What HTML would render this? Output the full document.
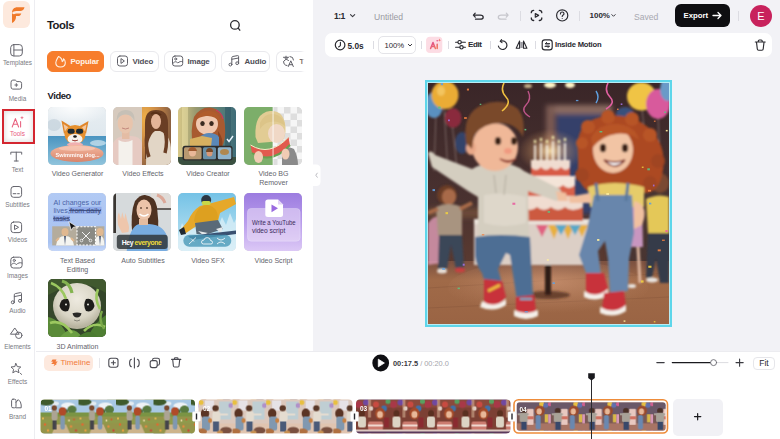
<!DOCTYPE html>
<html><head><meta charset="utf-8">
<style>
*{box-sizing:border-box;margin:0;padding:0}
html,body{width:780px;height:439px;overflow:hidden;background:#fff;font-family:"Liberation Sans",sans-serif;color:#1b1b1f}
.a{position:absolute}
svg{position:absolute;overflow:visible}
#side{position:absolute;left:0;top:0;width:35px;height:439px;background:#fff;border-right:1px solid #ededf1}
.sl{position:absolute;left:0;width:35px;text-align:center;font-size:6.4px;color:#7a7a82;line-height:7px;white-space:nowrap}
.ic{fill:none;stroke:#66666e;stroke-width:1.0;stroke-linecap:round;stroke-linejoin:round}
#panel{position:absolute;left:36px;top:0;width:277px;height:351px;background:#fff}
#stage{position:absolute;left:313px;top:0;width:467px;height:351px;background:#f2f2f6}
#tl{position:absolute;left:36px;top:351px;width:744px;height:88px;background:#fff;border-top:1px solid #ececf0}
.pill{position:absolute;top:51px;height:21px;border-radius:6px;border:1px solid #e9e9ed;background:#fff;font-size:7.9px;letter-spacing:-0.15px;font-weight:bold;color:#4e4e56;line-height:19px;white-space:nowrap}
.card{position:absolute;width:58px;height:58px;border-radius:5px;overflow:hidden}
.lbl{position:absolute;width:80px;text-align:center;font-size:7.05px;color:#64646c;line-height:9px;white-space:nowrap}
.t8{font-size:8.3px;font-weight:bold;color:#2a2a30;white-space:nowrap;line-height:10px}
.div{position:absolute;width:1px;background:#dcdce2}
</style></head><body>

<div id="side">
  <div id="logo" class="a" style="left:3px;top:1px;width:27px;height:27px;border-radius:6px;background:#fde9dd"></div>
  <div class="sl" style="top:59px">Templates</div>
  <div class="sl" style="top:94.5px">Media</div>
  <div class="sl" style="top:130px;color:#e8587e">Tools</div>
  <div class="sl" style="top:165.5px">Text</div>
  <div class="sl" style="top:200.5px">Subtitles</div>
  <div class="sl" style="top:236px">Videos</div>
  <div class="sl" style="top:271.5px">Images</div>
  <div class="sl" style="top:307px">Audio</div>
  <div class="sl" style="top:342.5px">Elements</div>
  <div class="sl" style="top:377.5px">Effects</div>
  <div class="sl" style="top:413px">Brand</div>
  <div class="a" style="left:1.5px;top:108.5px;width:33px;height:35.5px;border:2px solid #d42630;box-shadow:inset 0 0 5px 1px rgba(0,0,0,0.13)"></div>
</div>

<div id="panel">
  <div class="a" style="left:11px;top:19.3px;font-size:11.3px;letter-spacing:-0.45px;font-weight:bold;color:#1b1b1f;line-height:12px">Tools</div>
  <div class="pill" style="left:11px;width:57px;background:#f77d2c;border-color:#f77d2c;color:#fff4e8;padding-left:22.5px">Popular</div>
  <div class="pill" style="left:73.5px;width:49.5px;padding-left:22px">Video</div>
  <div class="pill" style="left:127.5px;width:52px;padding-left:23px">Image</div>
  <div class="pill" style="left:184.5px;width:49.5px;padding-left:23px">Audio</div>
  <div class="pill" style="left:239.5px;width:40px;padding-left:23px;border-right:none;border-radius:6px 0 0 6px">T</div>
  <div class="a" style="left:265px;top:48px;width:12px;height:27px;background:linear-gradient(90deg,rgba(255,255,255,0) 0,rgba(255,255,255,0.9) 3px,#fff 5px)"></div>
  <div class="a" style="left:11.5px;top:91px;font-size:9.4px;letter-spacing:-0.4px;font-weight:bold;line-height:10px;color:#1b1b1f">Video</div>
  <div class="card" style="left:11.5px;top:106.5px;background:#ccc"><svg width="58" height="58" viewBox="0 0 58 58" style="left:0;top:0">
<defs><linearGradient id="g1s" x1="0" y1="0" x2="0" y2="1"><stop offset="0" stop-color="#e8eef2"/><stop offset="0.5" stop-color="#dfe8ee"/><stop offset="1" stop-color="#c8dce6"/></linearGradient>
<linearGradient id="g1w" x1="0" y1="0" x2="0" y2="1"><stop offset="0" stop-color="#4a94c0"/><stop offset="1" stop-color="#90c4dc"/></linearGradient>
<linearGradient id="g1r" x1="0" y1="0" x2="0" y2="1"><stop offset="0" stop-color="#f4b8a0"/><stop offset="1" stop-color="#d8846a"/></linearGradient>
<radialGradient id="g1sun" cx="0.45" cy="0" r="0.6"><stop offset="0" stop-color="#fff" stop-opacity="0.9"/><stop offset="1" stop-color="#fff" stop-opacity="0"/></radialGradient></defs>
<rect width="58" height="58" fill="url(#g1s)"/>
<rect width="58" height="30" fill="url(#g1sun)"/>
<ellipse cx="6" cy="18" rx="7" ry="6" fill="#b8c8d4" opacity="0.5"/>
<rect y="29" width="58" height="29" fill="url(#g1w)"/>
<ellipse cx="50" cy="36" rx="8" ry="3" fill="#e8f4f8" opacity="0.6"/>
<path d="M13.5 13.5L16 27L24 20Z" fill="#e0862a"/><path d="M40.5 14L38 27L30 20Z" fill="#e0862a"/>
<path d="M15.5 17L17 25L21.5 21Z" fill="#f4c8a0"/><path d="M38.5 17.5L37 25L32.5 21Z" fill="#f4c8a0"/>
<ellipse cx="27" cy="27.5" rx="10.5" ry="9.5" fill="#e6902e"/>
<ellipse cx="27" cy="32" rx="7.5" ry="5" fill="#f6f2ec"/>
<rect x="19.5" y="21.8" width="7.2" height="5" rx="2.4" fill="#1c2a32"/><rect x="28" y="21.8" width="7.2" height="5" rx="2.4" fill="#1c2a32"/>
<ellipse cx="27" cy="29.5" rx="1.8" ry="1.3" fill="#1a1a1a"/>
<path d="M24 33Q27 35 30 33" stroke="#8a3a30" stroke-width="0.8" fill="#d86060"/>
<ellipse cx="27" cy="37.5" rx="8" ry="2.2" fill="#f0b0b0"/>
<ellipse cx="29" cy="46.5" rx="26.5" ry="8.5" fill="url(#g1r)"/>
<ellipse cx="29" cy="41.5" rx="18" ry="2.5" fill="#f8d0c0" opacity="0.6"/>
<text x="7.5" y="50" font-family="Liberation Sans" font-size="5.55" font-weight="bold" fill="#fff" opacity="0.95">Swimming dog...</text>
</svg></div>
  <div class="card" style="left:77px;top:106.5px;background:#ccc"><svg width="58" height="58" viewBox="0 0 58 58" style="left:0;top:0">
<defs><radialGradient id="g2a" cx="0.1" cy="0.2" r="0.9"><stop offset="0" stop-color="#f0b048"/><stop offset="0.5" stop-color="#c88848"/><stop offset="1" stop-color="#8a6040"/></radialGradient></defs>
<rect width="29" height="58" fill="#d6cabe"/>
<rect x="29" width="29" height="58" fill="url(#g2a)"/>
<path d="M0 36Q4 29 12 29H18Q27 29 29 36V58H0Z" fill="#e6cac2"/>
<path d="M5.5 33Q12 37 19.5 33V58H5.5Z" fill="#f4f1ec"/>
<rect x="9" y="22" width="7.5" height="10" fill="#e4bca4"/>
<ellipse cx="12.3" cy="16.5" rx="7.6" ry="10" fill="#e8c4ac"/>
<path d="M3.5 14Q3.5 3 12.5 3Q22 3 21.5 14Q19 7.5 12.5 7.5Q6 7.5 3.5 14Z" fill="#c6c0b6"/>
<path d="M9 21Q12.5 23 16 21" stroke="#b87870" stroke-width="0.8" fill="none"/>
<path d="M32 52V16Q32 3 43 3Q55 3 55 16V52Z" fill="#6a3e24"/>
<path d="M33 58Q33 30 42 24H47Q58 28 58 44V58Z" fill="#e2d6c6"/>
<ellipse cx="43" cy="14.5" rx="5" ry="7.5" fill="#e4b498"/>
<path d="M38 7Q43 4 48 8" stroke="#5a3018" stroke-width="2" fill="none"/>
<path d="M34 26Q32 40 36 50M52 24Q55 34 52 46" stroke="#6a3e24" stroke-width="3.5" fill="none"/>
</svg></div>
  <div class="card" style="left:142px;top:106.5px;background:#ccc"><svg width="58" height="58" viewBox="0 0 58 58" style="left:0;top:0">
<defs><linearGradient id="g3b" x1="0" y1="0" x2="1" y2="0"><stop offset="0" stop-color="#d8c888"/><stop offset="0.3" stop-color="#9a9a70"/><stop offset="0.7" stop-color="#5a8078"/><stop offset="1" stop-color="#3e6c78"/></linearGradient></defs>
<rect width="58" height="58" fill="url(#g3b)"/>
<rect x="4" y="0" width="6" height="58" fill="#f0e4a8" opacity="0.5"/>
<rect x="47" y="0" width="6" height="58" fill="#2a5060" opacity="0.5"/>
<path d="M15 40Q12 22 16 10Q22 0 32 0.5Q46 2 47 20Q48 32 44 40Z" fill="#a85a30"/>
<path d="M40 24Q46 32 44 40L40 38Z" fill="#8a4420"/>
<ellipse cx="29" cy="17" rx="11" ry="10.5" fill="#f0c8b0"/>
<path d="M18 13Q22 3 32 4Q42 5 42 15Q36 8 28 9Q21 10 18 13Z" fill="#b05c2c"/>
<path d="M38 3Q44 6 45 12" stroke="#c83a60" stroke-width="1.2" fill="none"/>
<ellipse cx="24.5" cy="16.5" rx="2.2" ry="2.6" fill="#3a2a20"/><ellipse cx="33.5" cy="16.5" rx="2.2" ry="2.6" fill="#3a2a20"/>
<path d="M22 40V30Q26 26 31 26Q38 26 41 30V40Z" fill="#5a88b8"/>
<path d="M12 32L24 29L34 31L33 40L12 40Z" fill="#d8b060"/>
<path d="M49 32L51 34.5L55 29" stroke="#e8f4ff" stroke-width="1.4" fill="none"/>
<rect x="0" y="50" width="58" height="8" fill="#3a5040"/>
<rect x="4.5" y="38.8" width="50" height="14.8" rx="2.5" fill="#2c2c2c"/>
<rect x="6" y="40.2" width="17.6" height="12" rx="1.5" fill="#b89870"/><ellipse cx="14.5" cy="45.5" rx="3.5" ry="4" fill="#eab898"/><path d="M10 44Q11 40 14.5 40Q18 40 19 44" fill="#a05a30"/>
<rect x="25" y="40.2" width="13" height="12" rx="1.5" fill="#6a90a8"/><ellipse cx="31.5" cy="46" rx="3" ry="3.5" fill="#d89878"/><path d="M28 45Q28 41 31.5 41Q35 41 35 45" fill="#7a4a28"/>
<rect x="39.8" y="40.2" width="13.5" height="12" rx="1.5" fill="#90b4cc"/><ellipse cx="46.5" cy="45" rx="4.5" ry="3" fill="#b08850"/>
</svg></div>
  <div class="card" style="left:207.5px;top:106.5px;background:#ccc"><svg width="58" height="58" viewBox="0 0 58 58" style="left:0;top:0">
<defs><pattern id="chk" x="1" y="0" width="13" height="13" patternUnits="userSpaceOnUse"><rect width="13" height="13" fill="#f6f6f6"/><rect width="6.5" height="6.5" fill="#dedede"/><rect x="6.5" y="6.5" width="6.5" height="6.5" fill="#dedede"/></pattern></defs>
<rect width="29" height="58" fill="#7cae6a"/>
<rect x="29" width="29" height="58" fill="url(#chk)"/>
<path d="M38 58V44Q44 38 50 42Q54 50 54 58Z" fill="#8a8a8a"/>
<path d="M11.5 30Q10 6 26 4Q40 3 41.5 20Q42 30 38 34L14 36Z" fill="#e2cc94"/>
<ellipse cx="32.5" cy="26.5" rx="8.5" ry="9.5" fill="#f0d8c6"/>
<path d="M16 16Q20 6 30 7Q40 9 41 19Q34 13 26 15Q20 16 16 22Z" fill="#dcc488"/>
<path d="M6.5 38Q26 50 44.5 30L46 38Q28 58 8 46Z" fill="#e25a4e"/>
<path d="M6.5 38Q26 50 44.5 30" stroke="#f4f0c8" stroke-width="1" fill="none"/>
<path d="M8 46Q28 58 46 38" stroke="#68a050" stroke-width="2" fill="none"/>
<ellipse cx="14.5" cy="50" rx="4.5" ry="6" fill="#f0ccb4"/><ellipse cx="41.5" cy="47" rx="4" ry="5.5" fill="#f0ccb4"/>
<rect x="28.6" y="0" width="0.9" height="58" fill="#fff" opacity="0.85"/>
</svg></div>
  <div class="card" style="left:11.5px;top:193px;background:#ccc"><svg width="58" height="58" viewBox="0 0 58 58" style="left:0;top:0">
<defs><linearGradient id="g5" x1="0" y1="0" x2="0" y2="1"><stop offset="0" stop-color="#b2caf4"/><stop offset="0.85" stop-color="#a8c2f0"/><stop offset="1" stop-color="#c4d6f8"/></linearGradient></defs>
<rect width="58" height="58" fill="url(#g5)"/>
<text x="5.5" y="11.8" font-family="Liberation Sans" font-size="7.1" fill="#4a64a8">AI changes our</text>
<rect x="20.5" y="13.8" width="33" height="7" fill="#92acea"/>
<text x="5.5" y="20" font-family="Liberation Sans" font-size="7.1" fill="#4a64a8">lives,</text>
<text x="22" y="20" font-family="Liberation Sans" font-size="7.1" fill="#3a4a7a" textLength="31">from daily</text>
<path d="M21 17.5H53" stroke="#3a4a7a" stroke-width="0.9"/>
<rect x="5" y="22.5" width="17" height="6.3" fill="#92acea"/>
<text x="5.5" y="28" font-family="Liberation Sans" font-size="7.1" fill="#3a4a7a">tasks</text>
<path d="M5 25.7H21" stroke="#3a4a7a" stroke-width="0.9"/>
<rect x="4.2" y="33.3" width="52.2" height="19.1" fill="#b4ac9c"/>
<ellipse cx="17" cy="39" rx="3.5" ry="4" fill="#e0b890"/><path d="M8 52.4Q9 43 17 43Q25 43 26 52.4Z" fill="#f4f4f0"/><path d="M16.2 43L17 52.4L17.8 43Z" fill="#2a3a5a"/>
<path d="M8 48L11 45M26 48L23 45" stroke="#e0b890" stroke-width="2"/>
<ellipse cx="52" cy="39" rx="3.5" ry="4" fill="#e0b890"/><path d="M45 52.4Q46 43 52 43Q56.4 43 56.4 52.4Z" fill="#f4f4f0"/><path d="M51.2 43L52 52.4L52.8 43Z" fill="#2a3a5a"/>
<rect x="29" y="33.8" width="18.5" height="18.2" fill="#8a8a84" stroke="#fff" stroke-width="1.1" stroke-dasharray="2 1.4"/>
<path d="M34 39L42 47M42 39L34 47" stroke="#fff" stroke-width="0.9"/><circle cx="33.5" cy="47.5" r="1.3" fill="none" stroke="#fff" stroke-width="0.7"/><circle cx="42.5" cy="47.5" r="1.3" fill="none" stroke="#fff" stroke-width="0.7"/>
<path d="M20.8 28.6L28.6 33.6L25 34.4L23.2 37.4Z" fill="#141414" stroke="#fff" stroke-width="0.7"/>
</svg></div>
  <div class="card" style="left:77px;top:193px;background:#ccc"><svg width="58" height="58" viewBox="0 0 58 58" style="left:0;top:0">
<rect width="58" height="58" fill="#d6dadc"/>
<rect x="0.3" width="2.7" height="40" fill="#3a3632"/>
<rect x="38" y="0" width="20" height="15.6" fill="#e0dcd8"/><path d="M44 2Q50 4 52 10" stroke="#dca898" stroke-width="3" fill="none"/>
<rect x="37" y="15.2" width="21" height="1.6" fill="#4a4440"/>
<path d="M19.4 42Q17 20 22 8Q27 1.5 32 2Q42 3 44 14Q46 28 45 42Z" fill="#4e3222"/>
<ellipse cx="31" cy="17" rx="7.5" ry="10.5" fill="#ecc4aa"/>
<path d="M26.5 21Q31 25 35.5 21" stroke="#fff" stroke-width="1.5" fill="none"/>
<ellipse cx="28" cy="15" rx="1" ry="0.8" fill="#3a2418"/><ellipse cx="34" cy="15" rx="1" ry="0.8" fill="#3a2418"/>
<path d="M13.7 58Q16 34 26 31H36Q52 32 54.7 46V58Z" fill="#78ace0"/>
<rect x="26" y="26" width="9" height="6" fill="#e4bca0"/>
<path d="M5 32Q3.8 22 6 19.5L8 26L9.2 19L11.2 26L12.6 20L14.4 28Q17 34 15.4 39L9 40Z" fill="#eec6ac"/>
<rect x="3.8" y="41.8" width="50.9" height="14.2" rx="3" fill="#30363a" opacity="0.85"/>
<text x="8.8" y="51.6" font-family="Liberation Sans" font-size="6.9" font-weight="bold" fill="#fff" textLength="40">Hey <tspan fill="#f0dc3a">everyone</tspan></text>
</svg></div>
  <div class="card" style="left:142px;top:193px;background:#ccc"><svg width="58" height="58" viewBox="0 0 58 58" style="left:0;top:0">
<defs><linearGradient id="g7" x1="0" y1="0" x2="0" y2="1"><stop offset="0" stop-color="#74c2e6"/><stop offset="0.6" stop-color="#a4d8ee"/><stop offset="1" stop-color="#e4f4fa"/></linearGradient></defs>
<rect width="58" height="58" fill="url(#g7)"/>
<path d="M0 44L4 30L8 38L12 26L16 36L20 30V58H0Z" fill="#d8eef6" opacity="0.8"/>
<path d="M40 34L44 24L48 32L52 20L56 30L58 26V58H40Z" fill="#d8eef6" opacity="0.8"/>
<path d="M1.5 38L10 28Q14 18 22 13L34 10L56 4L58 11L42 20L40 28Q32 32 20 32L8 40Z" fill="#e6a82a"/>
<path d="M16 28Q18 12 30 12Q40 14 40 26L36 31L20 32Z" fill="#dda020"/>
<ellipse cx="28.2" cy="7" rx="5" ry="5" fill="#2c3642"/>
<rect x="23.6" y="7.9" width="9.2" height="4.2" rx="2" fill="#c8d848"/>
<path d="M17 30L18.5 41L30 41L44.8 36L40 27Z" fill="#5a6a78"/>
<path d="M20 38L25 42L30 40Z" fill="#e4e8ea"/><path d="M38 36L43 40L45 34Z" fill="#e4e8ea"/>
<path d="M10 43L58 37.5V41L14 47Z" fill="#3a5070"/>
<path d="M1 37L6 34L8 41L3 42Z" fill="#202830"/>
<rect x="5.3" y="41.8" width="48" height="12" rx="6" fill="#4a98b8" opacity="0.8"/>
<path d="M11 51L18 44.5M13 45.5L16 48.5" stroke="#fff" stroke-width="0.8"/>
<path d="M25.5 51Q23.5 51 23.5 49Q23.5 47 26 47Q26.5 44.5 29.2 44.5Q32 44.5 32.5 47.5Q34.5 47.5 34.5 49.5Q34.5 51 33 51Z" stroke="#fff" stroke-width="0.8" fill="none"/>
<path d="M39 45Q43 49 47 45M39 51Q43 47 47 51" stroke="#fff" stroke-width="0.8" fill="none"/>
</svg></div>
  <div class="card" style="left:207.5px;top:193px;background:#ccc"><svg width="58" height="58" viewBox="0 0 58 58" style="left:0;top:0">
<defs><linearGradient id="g8" x1="0" y1="0" x2="0" y2="1"><stop offset="0" stop-color="#9c7ce0"/><stop offset="0.5" stop-color="#b89ceb"/><stop offset="1" stop-color="#dcc8f6"/></linearGradient></defs>
<rect width="58" height="58" fill="url(#g8)"/>
<rect x="3.6" y="15.6" width="52.4" height="32.5" rx="3.5" fill="#ecdff8" opacity="0.55" stroke="#f8f2fe" stroke-width="0.8"/>
<path d="M24 6.5H34L39 11.5V21.5Q39 24 36.5 24H24Q21.3 24 21.3 21.5V9Q21.3 6.5 24 6.5Z" fill="#fff"/>
<path d="M34 6.5V11.5H39Z" fill="#e4d4f8"/>
<path d="M27.5 11.5L34 15.3L27.5 19.2Z" fill="#9a6ae0"/>
<text x="7.9" y="32.4" font-family="Liberation Sans" font-size="6.6" fill="#3a2c5c" textLength="43.8" lengthAdjust="spacingAndGlyphs">Write a YouTube</text>
<text x="7.9" y="39.5" font-family="Liberation Sans" font-size="6.6" fill="#3a2c5c">video script</text>
</svg></div>
  <div class="card" style="left:11.5px;top:279px;background:#ccc"><svg width="58" height="58" viewBox="0 0 58 58" style="left:0;top:0">
<defs><radialGradient id="pf" cx="0.5" cy="0.35" r="0.6"><stop offset="0" stop-color="#eeeae0"/><stop offset="0.7" stop-color="#d8d4c4"/><stop offset="1" stop-color="#b8b4a0"/></radialGradient></defs>
<rect width="58" height="58" fill="#34462a"/>
<path d="M0 0H58V14Q40 2 20 6L0 16Z" fill="#40582e"/>
<ellipse cx="29" cy="27" rx="24" ry="23" fill="url(#pf)"/>
<path d="M11.5 27Q13 18 20 20Q23.5 26 20 32Q13.5 34 11.5 27Z" fill="#1c1c1a"/><path d="M46.5 27Q45 18 38 20Q34.5 26 38 32Q44.5 34 46.5 27Z" fill="#1c1c1a"/>
<circle cx="18" cy="25.5" r="1" fill="#e8e8e0"/><circle cx="40" cy="25.5" r="1" fill="#e8e8e0"/>
<path d="M24.5 34.3Q29 32.8 33.5 34.3Q32.5 38.6 29 38.6Q25.5 38.6 24.5 34.3Z" fill="#2a2a28"/>
<path d="M26 41Q29 43 32 41" stroke="#6a6a60" stroke-width="0.7" fill="none"/>
<path d="M0 38Q12 40 20 58H0Z" fill="#5a8a38"/><path d="M58 36Q46 44 40 58H58Z" fill="#4e7e32"/>
<path d="M12 58Q24 44 34 58Z" fill="#6a9e42"/><path d="M30 58Q42 48 50 58Z" fill="#4a7a30"/>
<path d="M3 4Q14 8 18 20M2 44Q14 40 24 54M36 52Q46 42 57 48M50 10Q46 20 52 30" stroke="#9cc860" stroke-width="2.6" fill="none"/>
<path d="M14 2Q22 4 24 14" stroke="#84b450" stroke-width="3.2" fill="none"/>
<path d="M54 32Q50 40 56 50" stroke="#7aa848" stroke-width="2.4" fill="none"/>
</svg></div>
  <div class="lbl" style="left:1.5px;top:169px">Video Generator</div>
  <div class="lbl" style="left:67px;top:169px">Video Effects</div>
  <div class="lbl" style="left:132px;top:169px">Video Creator</div>
  <div class="lbl" style="left:197.5px;top:169px">Video BG<br>Remover</div>
  <div class="lbl" style="left:1.5px;top:255.5px">Text Based<br>Editing</div>
  <div class="lbl" style="left:67px;top:255.5px">Auto Subtitles</div>
  <div class="lbl" style="left:132px;top:255.5px">Video SFX</div>
  <div class="lbl" style="left:197.5px;top:255.5px">Video Script</div>
  <div class="lbl" style="left:1.5px;top:341.5px">3D Animation</div>
</div>

<div id="stage">
  <div class="a t8" style="left:21px;top:10.5px;font-size:8.6px;letter-spacing:-0.55px">1:1</div>
  <div class="a" style="left:61px;top:12px;font-size:8.6px;color:#9a9aa2;line-height:10px">Untitled</div>
  <div class="div" style="left:207px;top:11px;height:10px"></div>
  <div class="div" style="left:266px;top:11px;height:10px"></div>
  <div class="a t8" style="left:276.5px;top:11px;font-size:8px">100%</div>
  <div class="a" style="left:321px;top:11.5px;font-size:8.6px;color:#a8a8b0;line-height:10px">Saved</div>
  <div class="a" style="left:361.5px;top:4px;width:55.5px;height:23px;border-radius:6px;background:#0e0e11"></div>
  <div class="a t8" style="left:370.5px;top:11px;color:#fff;font-size:7.8px">Export</div>
  <div class="div" style="left:424.5px;top:11px;height:10px"></div>
  <div class="a" style="left:437px;top:4.5px;width:22px;height:22px;border-radius:50%;background:#c8225c;color:#fff;font-size:11px;text-align:center;line-height:22px">E</div>

  <div class="a" style="left:12px;top:33px;width:447px;height:24px;background:#fff;border-radius:7px"></div>
  <div class="a t8" style="left:34.5px;top:40.5px">5.0s</div>
  <div class="div" style="left:60px;top:41px;height:8px"></div>
  <div class="a" style="left:65px;top:36px;width:38px;height:18px;border:1px solid #e4e4e8;border-radius:5px"></div>
  <div class="a t8" style="left:71.5px;top:40.5px;font-weight:normal;color:#2a2a30;font-size:7.7px">100%</div>
  <div class="div" style="left:108px;top:41px;height:8px"></div>
  <div class="a" style="left:113px;top:37px;width:16px;height:16px;border-radius:4px;background:#fde0e6"></div>
  <div class="div" style="left:134.5px;top:41px;height:8px"></div>
  <div class="a t8" style="left:155px;top:40px;font-size:8.1px;letter-spacing:-0.45px">Edit</div>
  <div class="div" style="left:176.5px;top:41px;height:8px"></div>
  <div class="div" style="left:221.5px;top:41px;height:8px"></div>
  <div class="a t8" style="left:242px;top:40px;font-size:7.6px;letter-spacing:-0.2px">Inside Motion</div>

  <div class="a" style="left:112px;top:80px;width:247px;height:247px;border:2px solid #5ed6ea;background:#b8ecf4"></div>
<div class="a" style="left:115px;top:83px;width:241px;height:241px;overflow:hidden;background:#3e2a2e">
<svg width="241" height="241" viewBox="0 0 241 241" style="left:0;top:0">
<defs>
<linearGradient id="cbg" x1="0" y1="0" x2="0" y2="1"><stop offset="0" stop-color="#3a2628"/><stop offset="0.5" stop-color="#4a3230"/><stop offset="0.75" stop-color="#5a3a30"/><stop offset="1" stop-color="#5a3a30"/></linearGradient>
<linearGradient id="fl" x1="0" y1="0" x2="0" y2="1"><stop offset="0" stop-color="#7a5040"/><stop offset="0.3" stop-color="#a06a48"/><stop offset="1" stop-color="#9a6444"/></linearGradient>
<radialGradient id="glow" cx="0.5" cy="0.5" r="0.5"><stop offset="0" stop-color="#ffe8b0" stop-opacity="0.9"/><stop offset="0.5" stop-color="#f0b070" stop-opacity="0.35"/><stop offset="1" stop-color="#f0b070" stop-opacity="0"/></radialGradient>
<radialGradient id="flg" cx="0.5" cy="0.4" r="0.55"><stop offset="0" stop-color="#d8a080" stop-opacity="0.6"/><stop offset="1" stop-color="#c89070" stop-opacity="0"/></radialGradient>
<filter id="bl" x="-5%" y="-5%" width="110%" height="110%"><feGaussianBlur stdDeviation="0.9"/></filter>
<filter id="bl2" x="-20%" y="-20%" width="140%" height="140%"><feGaussianBlur stdDeviation="2.5"/></filter>
</defs>
<rect width="241" height="241" fill="url(#cbg)"/>
<g filter="url(#bl2)">
<rect x="118" y="22" width="66" height="9" fill="#8a6a60"/>
<rect x="118" y="22" width="9" height="150" fill="#7a5a52"/>
<rect x="128" y="31" width="50" height="100" fill="#34406a"/>
<rect x="0" y="125" width="60" height="10" fill="#6a4838"/>
<rect x="180" y="100" width="61" height="80" fill="#4a3430"/>
</g>
<rect x="0" y="178" width="241" height="63" fill="url(#fl)"/>
<path d="M0 205L241 190M0 225L241 214" stroke="#84543a" stroke-width="0.8" opacity="0.5"/>
<ellipse cx="120" cy="205" rx="100" ry="28" fill="url(#flg)"/>
<g filter="url(#bl)">
<!-- balloons left -->
<path d="M16 25L20 90M24 40L30 95M8 30L6 88" stroke="#b8a8a0" stroke-width="0.7" opacity="0.7"/>
<ellipse cx="6" cy="22" rx="9" ry="13" fill="#5a90c0"/>
<ellipse cx="17" cy="12" rx="13.5" ry="14" fill="#eaac34"/>
<ellipse cx="13" cy="8" rx="4" ry="5" fill="#f6d070" opacity="0.7"/>
<ellipse cx="25" cy="35" rx="8.5" ry="10" fill="#8a2c3c"/>
<ellipse cx="34" cy="60" rx="7" ry="11" fill="#2e4a7a" opacity="0.8"/>
<!-- balloons right -->
<path d="M214 26L222 100M230 34L234 105" stroke="#b8a8a0" stroke-width="0.7" opacity="0.7"/>
<ellipse cx="197" cy="31" rx="9" ry="7" fill="#3a5a90" opacity="0.8"/>
<ellipse cx="213.5" cy="13.5" rx="14.5" ry="14" fill="#f0c444"/>
<ellipse cx="230" cy="21" rx="12" ry="15" fill="#d85a9c"/>
<ellipse cx="240" cy="6" rx="8" ry="12" fill="#6a9ac8"/>
<!-- lights -->
<ellipse cx="122" cy="2" rx="6" ry="3" fill="#fff4c8"/><ellipse cx="142" cy="2" rx="5" ry="3" fill="#fff4c8"/><ellipse cx="100" cy="3" rx="4" ry="2" fill="#ffe8b0" opacity="0.7"/>
<!-- left kid -->
<path d="M0 140Q6 132 12 134L14 180L0 182Z" fill="#d898b0" opacity="0.85"/>
<ellipse cx="19" cy="112" rx="10" ry="10" fill="#6a3e28"/>
<ellipse cx="21" cy="114" rx="7" ry="8" fill="#a86a48"/>
<path d="M8 124Q20 118 34 124L34 153L10 153Z" fill="#a89480"/>
<path d="M0 130L10 126M32 126L44 120" stroke="#a86a48" stroke-width="4"/>
<path d="M11 152L34 152L36 186L28 186L23 162L19 186L10 186Z" fill="#3a4658"/>
<ellipse cx="14" cy="188" rx="5" ry="2.5" fill="#e8e0d8"/><ellipse cx="32" cy="187" rx="5" ry="2.5" fill="#c84040"/>
<!-- right kids -->
<path d="M196 122Q205 118 214 122L215 164L196 164Z" fill="#c896c0"/>
<path d="M200 164L198 200M210 164L212 200" stroke="#e0b8a0" stroke-width="3"/>
<ellipse cx="204" cy="203" rx="4" ry="2" fill="#e8e4e0"/>
<ellipse cx="232" cy="100" rx="9" ry="10" fill="#7a4a30"/>
<path d="M218 116Q230 110 241 114V150H220Z" fill="#e4c858"/>
<path d="M220 150H241V200L232 200L228 175L224 195H218Z" fill="#343a48"/>
<ellipse cx="224" cy="197" rx="6" ry="2.5" fill="#e8e4e0"/>
<!-- table -->
<rect x="46" y="136" width="118" height="46" fill="#dccfc6"/>
<rect x="46" y="136" width="118" height="5" fill="#ece4dc"/>
<path d="M120 142L126 156L132 142ZM134 142L140 156L146 142ZM148 142L154 154L160 142Z" fill="#e8b040"/>
<path d="M127 142L133 152L139 142ZM141 142L147 152L153 142Z" fill="#58a8c8"/>
<path d="M108 142L114 154L120 142Z" fill="#e06080"/>
<rect x="117" y="182" width="6" height="30" fill="#2e1c18"/>
<ellipse cx="120" cy="212" rx="22" ry="4" fill="#3a2218" opacity="0.6"/>
<!-- cake -->
<ellipse cx="122" cy="68" rx="32" ry="22" fill="url(#glow)"/>
<path d="M103 77H142V93H103Z" fill="#f0dcd0"/>
<path d="M103 84Q108 90 113 84Q118 90 123 84Q128 90 133 84Q138 90 142 84V93H103Z" fill="#d85a44"/>
<path d="M99 93H147V113H99Z" fill="#f4e4d8"/>
<path d="M99 102Q105 108 111 102Q117 108 123 102Q129 108 135 102Q141 108 147 102V113H99Z" fill="#d86048"/>
<path d="M95 113H155V138H95Z" fill="#f0dcd0"/>
<path d="M95 124Q102 130 109 124Q116 130 123 124Q130 130 137 124Q144 130 155 124V138H95Z" fill="#cc5a40"/>
<path d="M107 62V78M113 60V78M119 62V78M125 58V78M131 62V78M137 60V78" stroke="#f8f0e0" stroke-width="1.8"/>
<path d="M107 57V60M113 55V58M119 57V60M125 53V56M131 57V60M137 55V58" stroke="#fff8b8" stroke-width="2"/>
<!-- boy -->
<path d="M0 70Q3 66 7 72L44 86Q52 80 70 80Q86 80 96 88L132 106L136 116L128 118L100 108L101 155Q78 161 50 157L50 114L40 108L4 84Z" fill="#d4cec0"/>
<path d="M56 112Q76 108 98 114L98 140Q76 146 56 140Z" fill="#e2dccf" opacity="0.7"/>
<path d="M66 92L68 110M78 92L76 112" stroke="#a8a294" stroke-width="0.8"/>
<path d="M128 108L138 110L140 118L130 118Z" fill="#f0c0a0"/>
<path d="M47 154Q72 150 102 154L105 216L89 218L82 172L78 170L70 186L74 200L58 204L54 190Q46 180 47 166Z" fill="#4e6e94"/>
<path d="M56 196L74 198L78 214Q70 226 56 222Z" fill="#c8323a"/>
<path d="M60 208L72 202" stroke="#f0c040" stroke-width="3"/>
<path d="M54 218Q66 226 78 216L78 222Q66 230 52 224Z" fill="#f4f0ea"/>
<path d="M88 214L106 212L108 228Q98 234 88 230Z" fill="#c8323a"/>
<path d="M86 227Q98 233 110 227V233Q98 239 86 233Z" fill="#f4f0ea"/>
<path d="M92 216L104 216" stroke="#58a8c8" stroke-width="2"/>
<ellipse cx="67" cy="64" rx="23" ry="24" fill="#f0b898"/>
<ellipse cx="43" cy="65" rx="5" ry="7" fill="#e8a888"/>
<path d="M38 60Q34 30 54 22Q74 14 90 26Q98 36 95 54Q88 40 72 40Q56 40 46 52L44 66Z" fill="#7a4a2c"/>
<ellipse cx="70" cy="58" rx="3.2" ry="4" fill="#3a2418"/><ellipse cx="86" cy="58" rx="3" ry="4" fill="#3a2418"/>
<ellipse cx="80" cy="68" rx="4" ry="3" fill="#f09a80"/>
<path d="M72 76Q80 82 88 76Q80 80 72 76Z" fill="#fff" stroke="#8a3028" stroke-width="1.5"/>
<!-- girl -->
<path d="M150 72Q146 40 172 34Q204 28 224 48Q240 66 234 92Q230 110 216 110L208 102L172 104L162 110Q148 100 150 84Z" fill="#ac4a22"/>
<circle cx="154" cy="60" r="6" fill="#b85428"/><circle cx="160" cy="44" r="7" fill="#b85428"/><circle cx="180" cy="34" r="7" fill="#b85428"/><circle cx="204" cy="36" r="7" fill="#b85428"/><circle cx="222" cy="52" r="7" fill="#b85428"/><circle cx="230" cy="78" r="7" fill="#a04420"/><circle cx="154" cy="92" r="7" fill="#a04420"/><circle cx="222" cy="100" r="7" fill="#a04420"/>
<ellipse cx="185" cy="67" rx="20" ry="23" fill="#f2c4a4"/>
<path d="M163 55Q170 40 190 41Q208 43 211 57Q200 49 188 51Q174 53 165 64Z" fill="#b85428"/>
<ellipse cx="175" cy="65" rx="3.2" ry="4.2" fill="#3a2418"/><ellipse cx="197" cy="65" rx="3.2" ry="4.2" fill="#3a2418"/>
<path d="M176 77Q187 89 197 77Q187 81 176 77Z" fill="#fff" stroke="#7a2820" stroke-width="1.5"/>
<path d="M160 104Q186 96 216 104L216 124L162 124Z" fill="#e6cc6a"/>
<path d="M166 112L204 112L206 150L201 176L200 208L182 210L180 176L177 158L170 168L173 192L160 195L151 172L159 146Z" fill="#6886ac"/>
<path d="M168 100L170 118M200 100L198 118" stroke="#58789c" stroke-width="3"/>
<path d="M140 114L162 110L164 120L142 120Z" fill="#f0c0a0"/>
<path d="M206 118Q222 122 214 142L206 146Z" fill="#f0c0a0"/>
<path d="M158 190L176 190L180 206Q170 216 158 212Z" fill="#c8323a"/>
<path d="M156 208Q168 216 180 206V212Q168 220 156 214Z" fill="#f4f0ea"/>
<path d="M176 210L196 208L198 224Q186 232 174 226Z" fill="#c8323a"/>
<path d="M172 224Q186 232 198 222V228Q186 236 172 230Z" fill="#f4f0ea"/>
</g>
<path d="M76 0Q72 8 78 14T74 28" stroke="#f0c040" stroke-width="1.6" fill="none"/>
<path d="M100 8Q104 16 98 22T102 34" stroke="#e060a0" stroke-width="1.4" fill="none" opacity="0.8"/>
<path d="M180 0Q176 8 182 14T178 26" stroke="#e060a0" stroke-width="1.6" fill="none"/>
<path d="M168 8Q172 14 168 20" stroke="#60a0e0" stroke-width="1.4" fill="none"/>
<g opacity="0.9"><rect x="17.5" y="129.1" width="2.5" height="2.1" fill="#f0d040"/><rect x="51.7" y="20.7" width="1.6" height="1.3" fill="#60c080"/><rect x="53.8" y="151.2" width="2.5" height="1.2" fill="#f08040"/><rect x="119.6" y="128.1" width="2.5" height="1.7" fill="#60c080"/><rect x="236.2" y="28.5" width="1.8" height="1.5" fill="#60c080"/><rect x="224.9" y="101.6" width="1.6" height="1.8" fill="#a070e0"/><rect x="84.4" y="119.7" width="2.9" height="2.1" fill="#e860a0"/><rect x="169.1" y="156.0" width="2.3" height="1.9" fill="#fff0a0"/><rect x="213.8" y="83.6" width="1.8" height="1.3" fill="#f0d040"/><rect x="14.2" y="185.1" width="2.8" height="1.6" fill="#60a0e0"/><rect x="221.0" y="119.7" width="2.3" height="1.7" fill="#60a0e0"/><rect x="212.9" y="197.4" width="2.7" height="2.2" fill="#f0d040"/><rect x="20.0" y="36.5" width="1.9" height="1.7" fill="#a070e0"/><rect x="229.7" y="166.4" width="3.1" height="1.9" fill="#f08040"/><rect x="178.3" y="110.1" width="2.7" height="1.8" fill="#fff0a0"/><rect x="96.5" y="45.9" width="1.8" height="1.5" fill="#60c080"/><rect x="12.7" y="0.1" width="2.4" height="2.1" fill="#60a0e0"/><rect x="147.9" y="16.9" width="2.5" height="1.3" fill="#60a0e0"/><rect x="29.6" y="204.6" width="2.3" height="1.5" fill="#60c080"/><rect x="34.7" y="180.7" width="2.0" height="2.0" fill="#a070e0"/><rect x="38.9" y="5.6" width="2.1" height="1.9" fill="#f08040"/><rect x="220.3" y="182.7" width="3.2" height="2.1" fill="#f0d040"/><rect x="195.6" y="237.4" width="1.8" height="1.4" fill="#fff0a0"/><rect x="118.8" y="176.2" width="2.0" height="1.5" fill="#fff0a0"/><rect x="225.8" y="238.1" width="1.6" height="1.3" fill="#f0d040"/><rect x="237.4" y="147.1" width="2.3" height="1.9" fill="#e860a0"/><rect x="192.7" y="20.4" width="1.7" height="1.6" fill="#a070e0"/><rect x="171.5" y="48.0" width="2.8" height="1.5" fill="#60c080"/><rect x="96.7" y="228.2" width="3.2" height="1.2" fill="#60a0e0"/><rect x="225.9" y="37.6" width="1.7" height="1.2" fill="#f08040"/><rect x="234.0" y="156.6" width="2.8" height="1.3" fill="#f08040"/><rect x="237.8" y="46.9" width="1.9" height="1.5" fill="#fff0a0"/><rect x="219.3" y="85.3" width="2.6" height="2.0" fill="#60c080"/><rect x="124.5" y="199.3" width="2.4" height="1.7" fill="#60a0e0"/><rect x="4.5" y="106.1" width="2.5" height="2.0" fill="#60a0e0"/><rect x="36.1" y="34.1" width="2.7" height="1.8" fill="#f08040"/><rect x="189.0" y="25.6" width="1.6" height="1.4" fill="#f08040"/><rect x="10.2" y="23.6" width="2.5" height="2.0" fill="#60c080"/><rect x="219.9" y="106.8" width="3.2" height="1.8" fill="#f08040"/></g>
</svg></div>
</div>

<div id="tl">
  <div class="a" style="left:8px;top:3px;width:49px;height:16px;border-radius:5px;background:#fde9de"></div>
  <div class="a" style="left:24.5px;top:6px;font-size:8px;color:#f27c3c;line-height:10px">Timeline</div>
  <div class="div" style="left:63px;top:6px;height:10px;background:#e6e6ea"></div>
  <div class="a" style="left:357px;top:7.5px;font-size:7.4px;font-weight:bold;color:#3a3a42;line-height:8px;white-space:nowrap">00:17.5 <span style="font-weight:normal;color:#a4a4ac">/ 00:20.0</span></div>
  <div class="a" style="left:717px;top:5px;width:22px;height:13px;border:1px solid #e6e6ea;border-radius:4px;font-size:8.5px;text-align:center;line-height:11px;color:#2a2a30">Fit</div>
  <div class="a" style="left:637px;top:46.5px;width:50px;height:37.5px;border-radius:5px;background:#f1f1f5"></div>
</div>
<svg width="780" height="439" style="left:0;top:0">
<defs>
<pattern id="p1" x="41" y="399.5" width="37.5" height="34" patternUnits="userSpaceOnUse">
 <rect width="37.5" height="34" fill="#9a9848"/>
 <rect width="37.5" height="14" fill="#a8c8e4"/>
 <ellipse cx="27" cy="6" rx="7" ry="3" fill="#eef2f6"/><ellipse cx="14" cy="4" rx="4" ry="2" fill="#e4ecf2"/>
 <ellipse cx="5" cy="2.5" rx="8" ry="3.5" fill="#3e5a2c"/><ellipse cx="31" cy="10" rx="4.5" ry="4" fill="#587a40"/><ellipse cx="24" cy="12" rx="3" ry="2.5" fill="#4a6a38"/>
 <rect y="13" width="37.5" height="4" fill="#7a9444"/>
 <path d="M0 17H37.5V34H0Z" fill="#94944a"/>
 <path d="M0 22H37.5" stroke="#8aa04a" stroke-width="3" opacity="0.6"/>
 <circle cx="4" cy="25" r="1.3" fill="#e06a30"/><circle cx="30" cy="27" r="1.2" fill="#e88a40"/><circle cx="33" cy="20" r="1" fill="#d05a30"/><circle cx="7" cy="31" r="1.2" fill="#e8a040"/><circle cx="2" cy="19" r="1" fill="#f0c050"/><circle cx="35" cy="31" r="1.2" fill="#c84a38"/><circle cx="28" cy="21" r="0.9" fill="#f4e0b0"/>
 <path d="M11 34L15 25H25L29 34Z" fill="#cdb48c"/>
 <ellipse cx="13.3" cy="8.5" rx="2.6" ry="2.8" fill="#7a4a30"/><rect x="10.5" y="11" width="6" height="10" rx="2" fill="#aca494"/><rect x="11.5" y="21" width="4" height="9" fill="#44444a"/>
 <ellipse cx="21.5" cy="12" rx="3.8" ry="4.2" fill="#b04a28"/><rect x="19.3" y="16" width="4.6" height="14" rx="2" fill="#8098b0"/>
</pattern>
<pattern id="p2" x="199" y="399.5" width="33.6" height="34" patternUnits="userSpaceOnUse">
 <rect width="33.6" height="34" fill="#dcc8bc"/>
 <rect x="20" y="2" width="12" height="18" fill="#b8d0d8" opacity="0.8"/><rect x="6" y="1" width="9" height="10" fill="#e8e8f0" opacity="0.8"/>
 <circle cx="2" cy="3" r="2.5" fill="#e8c040"/><circle cx="32" cy="6" r="2.5" fill="#b090c8"/>
 <rect y="24" width="33.6" height="10" fill="#e0c4b0"/>
 <ellipse cx="6" cy="14" rx="4.2" ry="5" fill="#5a3424"/><rect x="3" y="17" width="8" height="14" rx="2" fill="#8098b0"/>
 <ellipse cx="16.5" cy="8.8" rx="3.2" ry="3" fill="#5a3828"/><rect x="13.4" y="12" width="8" height="10" rx="2" fill="#e4dcd0"/><path d="M20 15H29" stroke="#e4dcd0" stroke-width="2"/><rect x="14" y="22" width="6" height="10" fill="#4a5a78"/>
 <ellipse cx="11" cy="21" rx="2" ry="2.5" fill="#c88040"/>
 <ellipse cx="3" cy="32" rx="5" ry="3" fill="#b07040"/><ellipse cx="27" cy="31" rx="6" ry="3.5" fill="#7a5040"/><ellipse cx="21" cy="33" rx="3" ry="2" fill="#c89050"/>
</pattern>
<pattern id="p3" x="356" y="399.5" width="34.5" height="34" patternUnits="userSpaceOnUse">
 <rect width="34.5" height="34" fill="#7c4034"/>
 <rect x="0" y="0" width="34.5" height="8" fill="#8a4a3c"/>
 <circle cx="3" cy="5" r="3.5" fill="#a83848"/><circle cx="10" cy="3" r="3" fill="#7048a0"/><circle cx="20" cy="5" r="3" fill="#c84a40"/><circle cx="28" cy="9" r="3" fill="#4070a8"/><circle cx="32" cy="2" r="2.5" fill="#58a060"/><circle cx="15" cy="9" r="2.2" fill="#e0d0c8"/>
 <rect x="12" y="0" width="3" height="18" fill="#e0c0a0" opacity="0.5"/>
 <ellipse cx="6" cy="14" rx="3" ry="3.5" fill="#5a3020"/><rect x="2" y="17" width="8" height="11" rx="2" fill="#dcd4c4"/>
 <ellipse cx="24" cy="14" rx="5" ry="6" fill="#a44a28"/><ellipse cx="24" cy="15" rx="3" ry="3.5" fill="#e8b898"/>
 <rect x="28" y="18" width="5" height="10" fill="#8a2a30"/>
 <rect x="12" y="22" width="15" height="9" rx="2" fill="#cc7c70"/><rect x="12" y="25" width="15" height="2" fill="#f0d8d0"/>
 <rect y="30" width="34.5" height="2" fill="#dcc8c0"/><rect y="32" width="34.5" height="2" fill="#5a3a5c"/>
</pattern>
<pattern id="p4" x="516.7" y="402.3" width="34.1" height="28.4" patternUnits="userSpaceOnUse">
 <rect width="34.1" height="28.4" fill="#7a5854"/>
 <rect width="34.1" height="12" fill="#6a5868"/>
 <circle cx="25" cy="2" r="2.5" fill="#e8c040"/><circle cx="29" cy="3" r="2.5" fill="#6070b0"/><circle cx="33" cy="2" r="2" fill="#d06090"/>
 <rect y="21" width="34.1" height="7.4" fill="#a87464"/>
 <rect x="10" y="6.6" width="7" height="16" rx="1" fill="#e8c8c0"/><rect x="10" y="14" width="7" height="3" fill="#d07060"/>
 <path d="M1 12H12" stroke="#a8a098" stroke-width="2"/>
 <ellipse cx="7" cy="8.5" rx="3" ry="2.8" fill="#4a3028"/><rect x="3" y="10.5" width="8" height="9.5" rx="2" fill="#a8a298"/><rect x="4.5" y="19.5" width="5.5" height="8" fill="#38486a"/>
 <ellipse cx="23" cy="8.5" rx="5" ry="5" fill="#9a4a2c"/><ellipse cx="22.5" cy="9.2" rx="2.6" ry="3" fill="#e8b898"/><rect x="19" y="13" width="5" height="14" rx="1.5" fill="#6a88b0"/>
 <rect x="28" y="12" width="3.5" height="8" fill="#d8b848"/><rect x="31.5" y="12" width="2.6" height="9" fill="#d898b8"/>
</pattern>
<clipPath id="k1"><rect x="40.5" y="399.5" width="154.5" height="34" rx="4"/></clipPath>
</defs>
<rect x="40.5" y="399.5" width="154.5" height="34" rx="4" fill="url(#p1)"/>
<rect x="198.5" y="399.5" width="154" height="34" rx="4" fill="url(#p2)"/>
<rect x="356" y="399.5" width="154.5" height="34" rx="4" fill="url(#p3)"/>
<rect x="514" y="399.8" width="153.5" height="33.2" rx="4.5" fill="#fff" stroke="#ee8c3a" stroke-width="1.6"/>
<rect x="516.7" y="402.3" width="149" height="28.4" rx="3" fill="url(#p4)"/>
<g font-family="Liberation Sans" font-size="6.5" font-weight="bold" fill="#fff">
<text x="44.5" y="410.5">01</text><text x="203" y="410.5">02</text><text x="360" y="410.5">03</text><text x="519.5" y="411.5">04</text>
</g>
<g fill="#fff" stroke="#e4e4e8" stroke-width="0.5">
<rect x="192.5" y="411.8" width="8" height="9.5" rx="1"/><rect x="350.5" y="411.8" width="8" height="9.5" rx="1"/><rect x="508" y="411.8" width="8" height="9.5" rx="1"/>
</g>
<g fill="#2a2a30"><rect x="195.8" y="413.5" width="1.4" height="6"/><rect x="353.8" y="413.5" width="1.4" height="6"/><rect x="511.3" y="413.5" width="1.4" height="6"/></g>
<path d="M591.5 379V439" stroke="#2a2a2e" stroke-width="1"/>
<path d="M588.2 373.3H594.8V378L591.5 380.5L588.2 378Z" fill="#1a1a1e"/>
</svg>


<svg id="ov" width="780" height="439" style="left:0;top:0;pointer-events:none">
<g class="ic">
 <!-- sidebar -->
 <rect x="10.7" y="44.6" width="11.6" height="11.4" rx="3"/><path d="M13.9 44.8V55.8M13.9 50H22.2"/>
 <path d="M11 82.2Q11 80.1 12.8 80.1H15.3L16.9 81.6H19.8Q21.6 81.6 21.6 83.4V87.1Q21.6 89.1 19.8 89.1H12.8Q11 89.1 11 87.1Z"/><path d="M16.3 83.6V86.4M14.9 85H17.7"/>
 <path d="M10.8 154.2V152.2H21.7V154.2M16.25 152.2V161M14.3 161H18.2" stroke-width="1"/>
 <rect x="11" y="186.5" width="10.6" height="10.8" rx="2.6"/><path d="M13.2 193.7H15.9M17.6 193.7H19.3"/>
 <rect x="11" y="222" width="10.6" height="10.6" rx="2.6"/><path d="M14.9 225.2L18.6 227.3L14.9 229.4Z" stroke-width="1"/>
 <rect x="10.8" y="257.2" width="11.3" height="10.8" rx="2.6"/><circle cx="14.3" cy="260.4" r="1.1"/><path d="M11 265.3C12.8 262.6 14.7 262.6 16.3 264.6C18 263.1 19.8 262.1 22 263"/>
 <circle cx="12.8" cy="302.3" r="1.5"/><circle cx="20" cy="300.8" r="1.5"/><path d="M14.3 302.2V294.8Q14.3 293.8 15.3 293.6L20.5 292.6Q21.5 292.5 21.5 293.5V300.8M14.3 296.6L21.5 295.2"/>
 <path d="M15 328.3L19.2 334.2H10.8Z"/><circle cx="18.8" cy="335.3" r="3.2"/>
 <path d="M15.9 363.5L17.3 366.6L20.8 367L18.2 369.3L19 372.8L15.9 371L12.8 372.8L13.6 369.3L11 367L14.5 366.6Z"/><path d="M20.4 373.4L21.6 374.4"/>
 <rect x="11.6" y="399.2" width="4.4" height="8.6" rx="1.4"/><path d="M16 402.4L18.2 399.6Q21.2 401.6 21.2 405V407.8H16"/>
 <!-- search -->
 <circle cx="234.9" cy="24.9" r="4.3" stroke="#2c2c32" stroke-width="1.3"/><path d="M238.2 28.2L239.8 30.2" stroke="#2c2c32" stroke-width="1.3"/>
 <!-- pills -->
 <path d="M58.5 56.5C57 59 55.8 60.5 55.8 62.8C55.8 65.3 57.8 67 60.5 67C63.3 67 65.3 65.3 65.3 62.8C65.3 60.8 64.3 59.3 63.5 58.7C63.6 60.3 63 61.3 62.2 61.6C62.2 59.5 60.8 57.5 58.5 56.5Z" stroke="#fff4e8" stroke-width="1.05"/>
 <rect x="117.5" y="56" width="10" height="10" rx="2.4" stroke="#5e5e66"/><path d="M121.3 58.8L124.4 61L121.3 63.2Z" stroke="#5e5e66" stroke-width="1"/>
 <rect x="172.5" y="56" width="10.2" height="10" rx="2.4" stroke="#5e5e66"/><circle cx="175.7" cy="59" r="1" stroke="#5e5e66"/><path d="M172.7 63.6C174.5 61.2 176.3 61.2 177.8 63C179.3 61.7 181 61 182.6 61.7" stroke="#5e5e66"/>
 <circle cx="230.4" cy="64.6" r="1.4" stroke="#5e5e66"/><circle cx="237.2" cy="63.2" r="1.4" stroke="#5e5e66"/><path d="M231.8 64.6V57.6Q231.8 56.7 232.7 56.5L237.6 55.6Q238.6 55.5 238.6 56.5V63.2M231.8 59.3L238.6 58" stroke="#5e5e66"/>
 <path d="M283.5 57.3H288.5M286 56.2V57.3M284.2 60.8L287.8 57.8M285 58.5L288.5 60.5M290 56.5Q293.5 56.5 293.5 60M288.3 66.5L290.8 60.8L293.3 66.5M289.2 64.7H292.4M283.6 61.5Q283.6 65.5 287 65.5" stroke="#5e5e66" stroke-width="1"/>
 <!-- top bar -->
 <path d="M475 15.2H480.2Q483.2 15.2 483.2 17.2Q483.2 19.2 480.2 19.2H475.5M475.2 13.2L473.4 15.2L475.2 17.2" stroke="#2a2a30" stroke-width="1.25"/>
 <path d="M506.5 15.2H501.3Q498.3 15.2 498.3 17.2Q498.3 19.2 501.3 19.2H506M506.3 13.2L508.1 15.2L506.3 17.2" stroke="#c6c6cc" stroke-width="1.25"/>
 <path d="M531.3 12.7Q531.3 10.3 533.7 10.3M539.3 10.3Q541.8 10.3 541.8 12.7M541.8 18Q541.8 20.5 539.3 20.5M533.7 20.5Q531.3 20.5 531.3 18" stroke="#2a2a30" stroke-width="1.3"/><path d="M535.3 13.6L538.6 15.4L535.3 17.2Z" stroke="#2a2a30" stroke-width="1.2"/>
 <circle cx="562.2" cy="15.4" r="5.6" stroke="#2a2a30" stroke-width="1.2"/><path d="M560.4 13.9Q560.4 12 562.2 12Q564 12 564 13.7Q564 14.8 562.8 15.3Q562.2 15.6 562.2 16.5" stroke="#2a2a30" stroke-width="1.15"/><circle cx="562.2" cy="18.5" r="0.5" fill="#2a2a30" stroke="none"/>
 <path d="M611.8 14.6L613.5 16.3L615.2 14.6" stroke="#3a3a40" stroke-width="1"/>
 <path d="M350.5 14.6L352.6 16.6L354.7 14.6" stroke="#3a3a40" stroke-width="1.1"/>
 <path d="M713 15.5H721M718 12.5L721 15.5L718 18.5" stroke="#fff" stroke-width="1.3"/>
 <!-- toolbar -->
 <circle cx="340.1" cy="45" r="4.8" stroke="#2a2a30" stroke-width="1.2"/><path d="M340.4 42.2V45.6L338.6 47" stroke="#2a2a30" stroke-width="1.1"/>
 <path d="M408.3 44.3L410 46L411.7 44.3" stroke="#3a3a40" stroke-width="1"/>
 <path d="M455.6 42.2H457.8M461.3 42.2H465.4M455.6 47.3H459.8M463.3 47.3H465.4" stroke="#2a2a30" stroke-width="1.1"/><circle cx="459.6" cy="42.2" r="1.7" stroke="#2a2a30" stroke-width="1.1"/><circle cx="461.5" cy="47.3" r="1.7" stroke="#2a2a30" stroke-width="1.1"/>
 <path d="M501 41.2A4.3 4.3 0 1 1 498.4 46" stroke="#2a2a30" stroke-width="1.2"/><path d="M501.6 39.6L500.2 41.3L502 42.6" stroke="#2a2a30" stroke-width="1.1"/>
 <path d="M519.6 41V48.3H516.2Z M523.5 41V48.3H526.9Z" stroke="#2a2a30" stroke-width="1.1"/><rect x="520.3" y="42" width="2.5" height="6" fill="#9a9aa0" stroke="none"/>
 <rect x="542.2" y="39.8" width="10" height="10" rx="2.6" stroke="#2a2a30" stroke-width="1.15"/><path d="M545.4 43.6H549.6M546.6 42.4L545.4 43.6L546.6 44.8M549.2 46.4H545M548 45.2L549.2 46.4L548 47.6" stroke="#2a2a30" stroke-width="1"/><rect x="545.5" y="44" width="4" height="2" fill="#9a9aa0" stroke="none"/>
 <path d="M755.3 42H765.2M758.3 42V41Q758.3 40 759.3 40H761.2Q762.2 40 762.2 41V42M756.5 42.2L757.3 49Q757.4 50.2 758.6 50.2H761.9Q763.1 50.2 763.2 49L764 42.2" stroke="#2a2a30" stroke-width="1.15"/>
 <!-- timeline -->
 <rect x="108.8" y="358.3" width="9.2" height="9" rx="2.2" stroke="#4a4a52" stroke-width="1.1"/><path d="M113.4 360.8V364.8M111.4 362.8H115.4" stroke="#4a4a52" stroke-width="1.1"/>
 <path d="M131.4 359.3Q129.6 359.6 129.6 363Q129.6 366.5 131.4 366.7M137.4 359.3Q139.2 359.6 139.2 363Q139.2 366.5 137.4 366.7M134.4 357.8V368" stroke="#4a4a52" stroke-width="1.1"/>
 <rect x="150.2" y="360.6" width="7" height="7" rx="2" stroke="#4a4a52" stroke-width="1.1"/><path d="M152.5 360.4V360.2Q152.5 358.3 154.4 358.3H157.6Q159.5 358.3 159.5 360.2V363.4Q159.5 365.3 157.6 365.3H157.4" stroke="#4a4a52" stroke-width="1.1"/>
 <path d="M171.6 359.4H180.8M174.4 359.4V358.6Q174.4 357.7 175.3 357.7H177.1Q178 357.7 178 358.6V359.4M172.7 359.6L173.4 366Q173.5 367 174.6 367H177.8Q178.9 367 179 366L179.7 359.6" stroke="#4a4a52" stroke-width="1.1"/>
 <path d="M656.8 362.6H664.2M736 362.6H743.2M739.6 359V366.2" stroke="#3a3a40" stroke-width="1.1"/>
 <path d="M672.3 362.6H711" stroke="#1a1a1e" stroke-width="1.2"/><path d="M716.5 362.6H728" stroke="#dcdce0" stroke-width="1"/>
 <circle cx="713.6" cy="362.6" r="3" fill="#fff" stroke="#6a6a72" stroke-width="0.9"/>
 <path d="M694.5 416.6H700.8M697.65 413.5V419.8" stroke="#1a1a1e" stroke-width="1.2"/>
</g>
</svg>

<svg width="780" height="439" style="left:0;top:0;pointer-events:none">
 <path d="M12 13C12 9.4 14.2 7.3 17.3 7.3H24.5C24 9.9 22.3 11 20.3 11H16.3C14.5 11 12.6 11.7 12 13Z" fill="#f07a2a"/>
 <path d="M12.6 16.6C13 14.8 14.6 13.4 16.6 13.4H21.3C20.9 15 19.6 16.1 17.8 16.1H15.8C14.6 16.1 13.2 16.3 12.6 16.6Z" fill="#f07a2a"/>
 <path d="M12 12.8V23C14.6 21.8 16 19.6 16 17V14.2C15 14.2 12.4 14.6 12 12.8Z" fill="#f07a2a"/>
 <g stroke="#e8607e" stroke-width="1.05" fill="none" stroke-linecap="round" stroke-linejoin="round">
  <path d="M12.2 127L15.4 118.6L18.6 127M13.3 124.2H17.5M20.6 121.5V127"/>
 </g>
 <path d="M22 115.8L22.5 117.2L23.9 117.7L22.5 118.2L22 119.6L21.5 118.2L20.1 117.7L21.5 117.2Z" fill="#e8607e"/>
 <rect x="426.5" y="36.8" width="15.8" height="15.6" rx="3.5" fill="#fcdce4"/>
 <defs><linearGradient id="aig" x1="0" y1="0" x2="1" y2="1"><stop offset="0" stop-color="#e04a90"/><stop offset="1" stop-color="#f07a5a"/></linearGradient></defs>
 <g stroke="url(#aig)" stroke-width="1.5" fill="none" stroke-linecap="round" stroke-linejoin="round">
  <path d="M430.6 48.6L433 42.4L435.4 48.6M431.5 46.6H434.5M437.2 44.2V48.6"/>
 </g>
 <circle cx="437.2" cy="40.8" r="0.8" fill="#e8508a"/>
 <path d="M439.5 38.6L439.9 39.8L441.1 40.2L439.9 40.6L439.5 41.8L439.1 40.6L437.9 40.2L439.1 39.8Z" fill="#f06a60"/>
 <circle cx="380.7" cy="363" r="8.4" fill="#0e0e12"/>
 <path d="M378.3 359.2L384.4 363L378.3 366.8Z" fill="#fff" stroke="#fff" stroke-width="0.8" stroke-linejoin="round"/>
 <path d="M52.5 359.5H56.5L55.5 361.5H57.8L55.8 363.8H57.3L53.5 366.2L54.5 364H51.2L53.2 361.8H51.2Z" fill="#f27c3c"/>
 <path d="M313 164.5H316Q320.5 164.5 320.5 169V181.5Q320.5 186 316 186H313Z" fill="#fff"/>
 <path d="M317.5 172.8L315.8 175.2L317.5 177.6" stroke="#b4b4ba" stroke-width="0.9" fill="none"/>
</svg>
</body></html>
